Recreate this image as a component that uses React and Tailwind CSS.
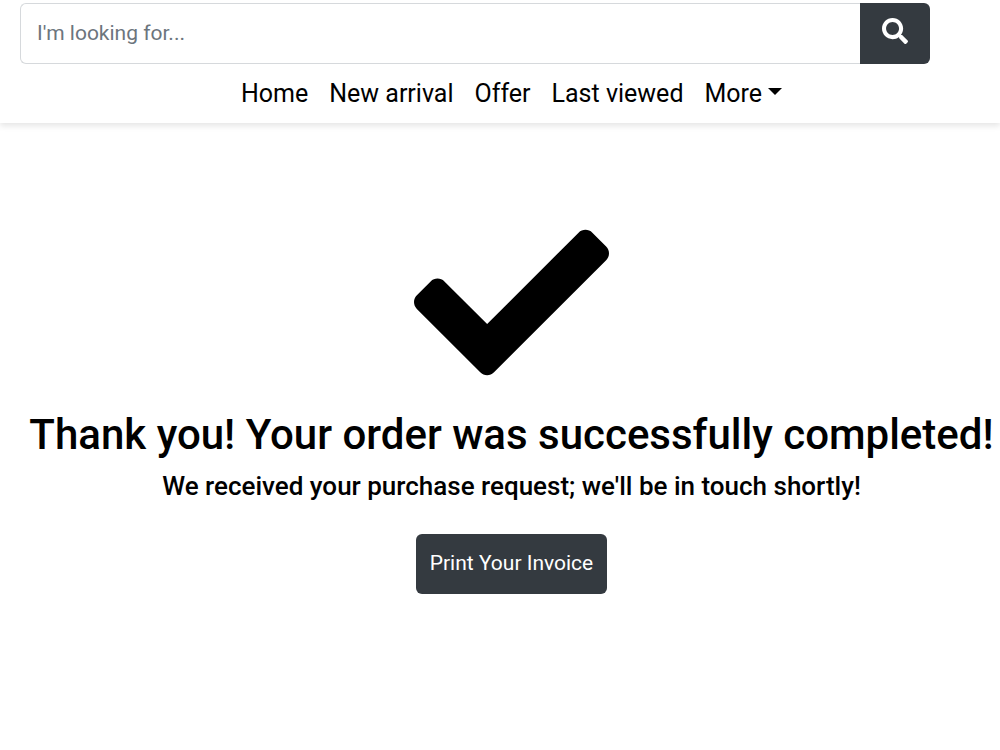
import React from "react";
import { FaSearch, FaCheck } from "react-icons/fa";

const links = ["Home", "New arrival", "Offer", "Last viewed"];

export default function App() {
  return (
    <div className="min-h-screen bg-white font-['Roboto',sans-serif] text-black">
      <header className="pt-[3px] shadow-[0_3px_6px_rgba(0,0,0,0.1)]">
        <form className="ml-5 mr-[70px] flex h-[61px]" onSubmit={(e) => e.preventDefault()}>
          <input
            type="search"
            aria-label="Search products"
            placeholder="I'm looking for..."
            className="min-w-0 flex-1 rounded-l-md border border-r-0 border-[#d6d9dc] bg-white px-4 text-[21px] placeholder:text-[#6c757d]"
          />
          <button aria-label="Search" className="flex w-[70px] items-center justify-center rounded-r-md bg-[#343a40] text-white">
            <FaSearch className="mb-1.5 size-[26px]" />
          </button>
        </form>
        <nav className="flex h-[59px] items-center justify-center gap-[21px] pl-[23px] text-[25px]">
          {links.map((label) => (
            <a key={label} href="#">{label}</a>
          ))}
          <button className="flex items-center gap-[6px]">
            More
            <svg aria-hidden="true" viewBox="0 0 14 7" className="mb-1 h-[7px] w-[14px]">
              <path d="M0 0H14L7 7Z" fill="currentColor" />
            </svg>
          </button>
        </nav>
      </header>
      <main className="flex flex-col items-center pl-[23px] pt-[82px] text-center">
        <FaCheck className="size-[195px]" />
        <h1 className="mt-[10px] whitespace-nowrap text-[42px] font-medium leading-[50px]">
          Thank you! Your order was successfully completed!
        </h1>
        <h2 className="mt-[10px] text-[26px] font-medium leading-8">
          We received your purchase request; we'll be in touch shortly!
        </h2>
        <button className="mt-8 h-[60px] rounded-md bg-[#343a40] px-[14px] text-[21px] text-white">
          Print Your Invoice
        </button>
      </main>
    </div>
  );
}
